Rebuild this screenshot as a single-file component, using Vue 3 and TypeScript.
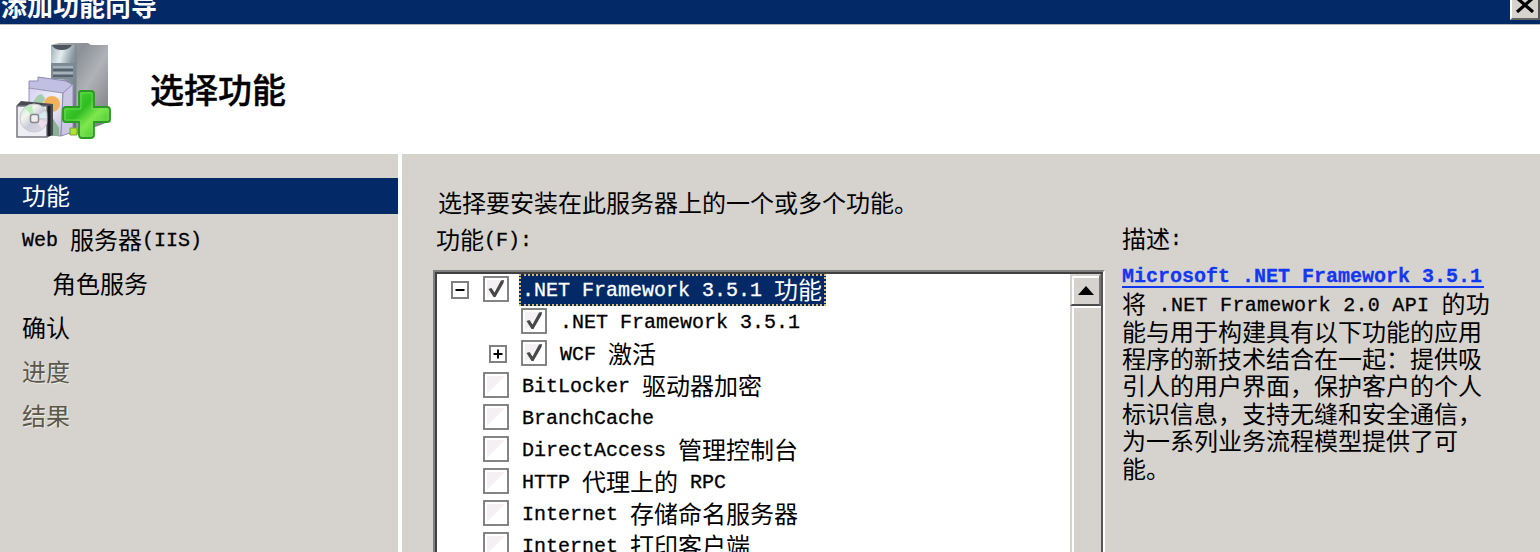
<script setup lang="ts">
import { h, type FunctionalComponent } from 'vue'

interface Feature {
  label: string
  level: number
  checked?: boolean
  selected?: boolean
  toggle?: 'minus' | 'plus'
}

// Half-width and full-width runs keep the 1:2 cell ratio of a bitmap CJK font.
const Mixed: FunctionalComponent<{ text: string }> = (props) =>
  h(
    'span',
    { class: 'mixed' },
    (props.text.match(/[\x20-\x7e]+|[^\x20-\x7e]+/g) ?? []).map((run) =>
      h('span', { class: run.charCodeAt(0) < 127 ? 'half' : 'full' }, run),
    ),
  )
Mixed.props = ['text']

const steps = [
  { label: '功能', state: 'active' },
  { label: 'Web 服务器(IIS)', state: '' },
  { label: '角色服务', state: 'nested' },
  { label: '确认', state: '' },
  { label: '进度', state: 'disabled' },
  { label: '结果', state: 'disabled' },
]

const features: Feature[] = [
  { label: '.NET Framework 3.5.1 功能', level: 0, checked: true, selected: true, toggle: 'minus' },
  { label: '.NET Framework 3.5.1', level: 1, checked: true },
  { label: 'WCF 激活', level: 1, checked: true, toggle: 'plus' },
  { label: 'BitLocker 驱动器加密', level: 0 },
  { label: 'BranchCache', level: 0 },
  { label: 'DirectAccess 管理控制台', level: 0 },
  { label: 'HTTP 代理上的 RPC', level: 0 },
  { label: 'Internet 存储命名服务器', level: 0 },
  { label: 'Internet 打印客户端', level: 0 },
]

const description = [
  '将 .NET Framework 2.0 API 的功',
  '能与用于构建具有以下功能的应用',
  '程序的新技术结合在一起：提供吸',
  '引人的用户界面，保护客户的个人',
  '标识信息，支持无缝和安全通信，',
  '为一系列业务流程模型提供了可',
  '能。',
]
</script>

<template>
  <div class="wizard">
    <header class="titlebar">
      <span class="title">添加功能向导</span>
      <button class="close" aria-label="close">
        <svg width="20" height="15" viewBox="0 0 20 15"><path d="M2 0L18 14M18 0L2 14" stroke="#000" stroke-width="3.2" /></svg>
      </button>
    </header>

    <section class="banner">
      <svg class="logo" width="96" height="98" viewBox="0 0 96 98">
        <defs>
          <linearGradient id="side" x1="0" y1="0" x2="1" y2="1">
            <stop offset="0" stop-color="#a9acaf" /><stop offset=".3" stop-color="#8b9196" />
            <stop offset=".55" stop-color="#b0b2b7" /><stop offset="1" stop-color="#6f7178" />
          </linearGradient>
          <linearGradient id="front" x1="0" y1="0" x2="1" y2="1">
            <stop offset="0" stop-color="#9fb0b8" /><stop offset=".25" stop-color="#e4eef2" />
            <stop offset=".5" stop-color="#8b979f" /><stop offset="1" stop-color="#5e6871" />
          </linearGradient>
          <linearGradient id="box" x1="0" y1="0" x2="1" y2="1">
            <stop offset="0" stop-color="#d3d2ee" /><stop offset=".5" stop-color="#f1f0fb" /><stop offset="1" stop-color="#b9b7d8" />
          </linearGradient>
          <linearGradient id="plus" x1="0" y1="0" x2="1" y2="1">
            <stop offset="0" stop-color="#5be043" /><stop offset=".4" stop-color="#2fbd22" />
            <stop offset=".6" stop-color="#7ee84e" /><stop offset="1" stop-color="#2cae20" />
          </linearGradient>
          <linearGradient id="disc" x1="0" y1="0" x2="1" y2="1">
            <stop offset="0" stop-color="#aee8b4" /><stop offset=".3" stop-color="#f5f5ee" />
            <stop offset=".55" stop-color="#c9ccd8" /><stop offset="1" stop-color="#e9d9ee" />
          </linearGradient>
        </defs>
        <path d="M35 3L43 1H72L75 3H92V80L62 92H35Z" fill="url(#side)" />
        <path d="M35 3H60V92H35Z" fill="url(#front)" />
        <path d="M36 3H56Q53 8 46 8Q38 8 36 3Z" fill="#4d565e" />
        <path d="M35 21H60V37H35Z" fill="#7d8b95" />
        <path d="M37 25H57M37 31H57" stroke="#b4c0c8" stroke-width="1.5" />
        <path d="M37 28H57M37 34H57" stroke="#4a5560" stroke-width="1.4" />
        <path d="M60 3V92" stroke="#7b848b" />
        <path d="M22 35L50 39L57 43L50 52L13 47L13 39H22Z" fill="#c1c0e2" stroke="#8d8bb2" />
        <path d="M13 46L47 51L45 94L13 91Z" fill="url(#box)" stroke="#9694b5" />
        <path d="M47 51L57 42V90L45 94Z" fill="#c9c7e2" stroke="#8f8dae" />
        <circle cx="36" cy="62" r="8" fill="#f2b25a" />
        <path d="M17 60Q25 46 29 57L25 65Z" fill="#a5cdb0" />
        <path d="M36 75L43 86V94H34Z" fill="#8bb095" />
        <path d="M54 86H61V93H54Z" fill="#a8e62f" stroke="#7c9d45" />
        <path d="M1 63L5 59L37 62V93L32 95H1Z" fill="#4a4c53" />
        <path d="M1 64H31V95H1Z" fill="#eeedf3" stroke="#77777e" stroke-width="1.5" />
        <circle cx="18" cy="76" r="14" fill="url(#disc)" stroke="#c8cad2" />
        <path d="M18 76L9 66L16 63Z" fill="#b8efb8" />
        <path d="M18 76L29 69L31 76Z" fill="#d8eff2" />
        <path d="M18 76L26 87L31 80Z" fill="#f0dceb" />
        <rect x="14.500" y="72.500" width="8" height="8" rx="2" fill="#eee" stroke="#85868e" stroke-width="1.5" />
        <path d="M33 64V94" stroke="#1f2126" stroke-width="3" />
        <path d="M65 49H75Q78 49 78 52V65H91Q94 65 94 68V78Q94 80 91 80H78V93Q78 96 74 96H66Q63 96 63 93V80H50Q47 80 47 77V68Q47 65 50 65H63V51Q63 49 65 49Z" fill="url(#plus)" stroke="#2a9a22" stroke-width="1.800" />
        <path d="M65 51H76V67H92V78H76V94H65V78H49V67H65Z" fill="none" stroke="#7ddf62" stroke-width="1" opacity=".7" />
      </svg>
      <h1>选择功能</h1>
    </section>

    <main class="body">
      <nav class="steps">
        <div v-for="s in steps" :key="s.label" class="step" :class="s.state"><Mixed :text="s.label" /></div>
      </nav>

      <section class="content">
        <p class="prompt">选择要安装在此服务器上的一个或多个功能。</p>
        <div class="list-label"><Mixed text="功能(F):" /></div>
        <div class="listbox">
          <div class="rows">
            <div v-for="f in features" :key="f.label" class="row" :class="{ child: f.level === 1 }">
              <span class="toggle-slot">
                <svg v-if="f.toggle" width="18" height="18" viewBox="0 0 18 18">
                  <rect x="1" y="1" width="16" height="16" fill="#fff" stroke="#808080" stroke-width="2" />
                  <path d="M4.500 9H13.500" stroke="#000" stroke-width="2" />
                  <path v-if="f.toggle === 'plus'" d="M9 4.500V13.500" stroke="#000" stroke-width="2" />
                </svg>
              </span>
              <svg class="check" width="26" height="26" viewBox="0 0 26 26">
                <rect x="1" y="1" width="24" height="24" fill="#fff" stroke="#777" stroke-width="1.800" />
                <path d="M4 4H22L4 22Z" fill="#f4f0f4" />
                <path v-if="f.checked" d="M5.500 13L8.500 12L11.500 16.500L18 4.500L21 4L20.500 7L12.500 21H10.500Z" fill="#484848" />
              </svg>
              <span class="label" :class="{ selected: f.selected }"><Mixed :text="f.label" /></span>
            </div>
          </div>
          <div class="scrollbar">
            <div class="arrow"><svg width="16" height="9" viewBox="0 0 16 9"><path d="M8 0L16 9H0Z" fill="#000" /></svg></div>
            <div class="thumb"></div>
          </div>
        </div>
      </section>

      <aside class="info">
        <div class="info-label"><Mixed text="描述:" /></div>
        <a class="link"><Mixed text="Microsoft .NET Framework 3.5.1" /></a>
        <p v-for="line in description" :key="line" class="line"><Mixed :text="line" /></p>
      </aside>
    </main>
  </div>
</template>

<style>
.mixed {
  display: flex;
  align-items: center;
  white-space: pre;
}
.mixed .half {
  padding-top: 2px;
  font-family: "Liberation Mono", monospace;
  font-size: 20px;
  line-height: 22px;
  -webkit-text-stroke: 0.3px currentColor;
}
.mixed .full {
  padding-bottom: 3px;
  font-family: "Noto Sans CJK SC", sans-serif;
  font-size: 24px;
  line-height: 24px;
}
</style>

<style scoped>
.wizard {
  width: 1540px;
  height: 552px;
  overflow: hidden;
  display: flex;
  flex-direction: column;
  background: #d6d3ce;
  color: #000;
  font-family: "Liberation Mono", "Noto Sans CJK SC", sans-serif;
  font-size: 24px;
}
.titlebar {
  height: 24px;
  flex: none;
  display: flex;
  justify-content: space-between;
  align-items: flex-end;
  overflow: hidden;
  background: #042967;
  border-bottom: 1px solid #b9b9bd;
}
.title {
  padding-left: 1px;
  margin-bottom: 5px;
  font: bold 26px/28px "Noto Sans CJK SC", sans-serif;
  color: #fff;
}
.close {
  width: 30px;
  height: 24px;
  margin-bottom: 4px;
  padding: 0 0 5px;
  display: flex;
  align-items: flex-end;
  justify-content: center;
  background: #d6d3ce;
  border: 2px solid;
  border-color: #fff #555 #666 #fff;
  border-radius: 0;
}
.banner {
  height: 129px;
  flex: none;
  display: flex;
  align-items: flex-start;
  background: #fff;
}
.logo {
  margin: 17px 0 0 16px;
}
h1 {
  margin: 42px 0 0 38px;
  font: 500 34px/44px "Noto Sans CJK SC", sans-serif;
  -webkit-text-stroke: 0.4px #000;
}
.body {
  flex: 1;
  min-height: 0;
  display: flex;
}
.steps {
  width: 398px;
  flex: none;
  padding-top: 24px;
  border-right: 4px solid #fff;
}
.step {
  height: 36px;
  margin-bottom: 8px;
  padding-left: 22px;
  display: flex;
  align-items: center;
}
.step.active {
  background: #042967;
  color: #fff;
}
.step.nested {
  padding-left: 52px;
}
.step.disabled {
  color: #5a574b;
  text-shadow: 1px 1px 0 #eeece8;
}
.content {
  width: 703px;
  flex: none;
  padding-left: 31px;
  box-sizing: border-box;
}
.prompt {
  margin: 30px 0 2px 5px;
  font: 24px/36px "Noto Sans CJK SC", sans-serif;
  white-space: nowrap;
}
.list-label {
  height: 36px;
  margin-left: 3px;
  display: flex;
  align-items: center;
}
.listbox {
  height: 300px;
  margin-top: 12px;
  display: flex;
  justify-content: space-between;
  box-sizing: border-box;
  background: #fff;
  border: 2px solid #808080;
  border-right: 2px solid #fff;
  box-shadow: inset 2px 2px 0 #404040, inset -2px 0 0 #555;
}
.rows {
  padding: 2px 0 0 16px;
}
.row {
  height: 32px;
  display: flex;
  align-items: center;
}
.row.child {
  padding-left: 38px;
}
.toggle-slot {
  width: 32px;
  height: 18px;
  line-height: 0;
}
.check {
  margin-bottom: 2px;
}
.label {
  height: 32px;
  margin-left: 10px;
  padding: 0 4px 0 3px;
  box-sizing: border-box;
  display: flex;
  align-items: center;
}
.label.selected {
  background: #042967;
  color: #fff;
  outline: 2px dotted #d8bc78;
  outline-offset: -2px;
}
.scrollbar {
  width: 31px;
  margin: 2px 2px 0 0;
  display: flex;
  flex-direction: column;
  background: #d6d3ce;
}
.arrow {
  height: 32px;
  display: flex;
  align-items: center;
  justify-content: center;
  box-sizing: border-box;
  border: 2px solid;
  border-color: #d6d3ce #777 #4c4c4c #d6d3ce;
  box-shadow: inset 2px 2px 0 #fff;
}
.thumb {
  flex: 1;
  border-left: 2px solid #d6d3ce;
  box-shadow: inset 2px 2px 0 #fff;
}
.info {
  padding-left: 17px;
}
.info-label {
  height: 36px;
  margin-top: 67px;
  display: flex;
  align-items: center;
}
.link {
  width: 362px;
  height: 23px;
  margin: 8px 0 3px;
  display: flex;
  align-items: center;
  color: #1238f0;
  font-weight: bold;
  border-bottom: 2px solid #1238f0;
  box-sizing: border-box;
}
.line {
  height: 27.4px;
  margin: 0;
  display: flex;
  align-items: center;
}
.line:nth-of-type(1) {
  letter-spacing: 0.3px;
}
</style>
